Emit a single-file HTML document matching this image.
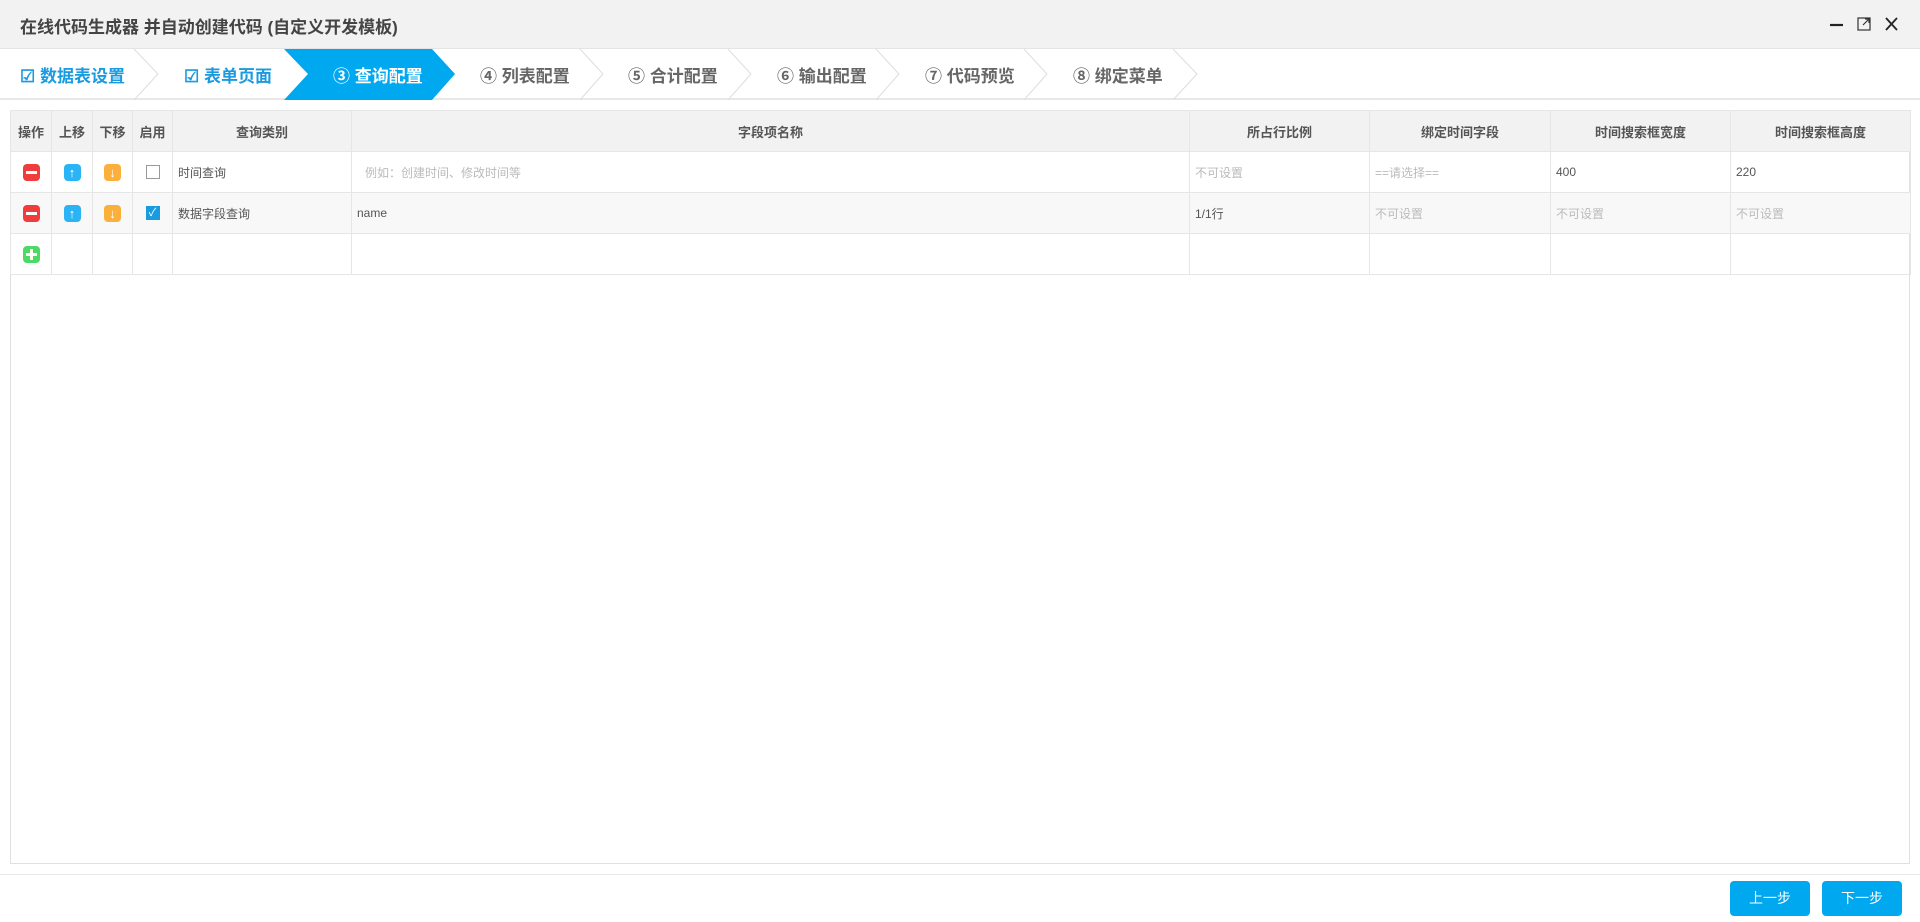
<!DOCTYPE html>
<html><head><meta charset="utf-8"><style>
*{margin:0;padding:0;box-sizing:border-box}
body{width:1920px;height:922px;background:#fff;font-family:"Liberation Sans","Noto Sans CJK SC",sans-serif;position:relative;overflow:hidden;color:#333}
.title{position:absolute;left:0;top:0;width:1920px;height:49px;background:#f2f2f2;border-bottom:1px solid #e4e4e4}
.title span{position:absolute;left:20px;top:13px;font-size:17px;font-weight:bold;color:#444}
.wicons{position:absolute;top:14px;right:14px}
.steps{position:absolute;left:0;top:49px;width:1920px;height:51px;border-bottom:2px solid #e8e8e8}
.st{position:absolute;top:13px;font-size:17px;color:#666;white-space:nowrap;font-weight:bold}
.st.done{color:#1a9be0}
.st.cur{color:#fff}
table{position:absolute;left:10px;top:110px;border-collapse:collapse;font-size:12px;color:#555}
td,th{border:1px solid #e6e6e6;height:41px;padding:0 5px;text-align:left;white-space:nowrap}
th{background:#f2f2f2;font-weight:bold;text-align:center;color:#555;font-size:13px}
tr.r2 td{background:#f8f8f8}
.ph{color:#bbb}
.c{text-align:center;padding:0}
.ic{display:inline-block;width:17px;height:17px;border-radius:4px;vertical-align:middle;position:relative}
.frame{position:absolute;left:10px;top:110px;width:1900px;height:754px;border:1px solid #e0e0e0}
.btn{position:absolute;top:881px;width:80px;height:35px;background:#00a8f0;color:#fff;border-radius:4px;font-size:14px;text-align:center;line-height:35px}
</style></head><body>
<div class="title"><span>在线代码生成器 并自动创建代码 (自定义开发模板)</span>
<svg class="wicons" width="80" height="20" viewBox="0 0 80 20"><path d="M4 11h13" stroke="#222" stroke-width="2.2"/><rect x="32" y="4" width="12" height="12" fill="none" stroke="#333" stroke-width="1.2"/><path d="M37 11l6-6M39 5h4v4" stroke="#333" stroke-width="1.2" fill="none"/><path d="M60 4l11 12M71 4l-11 12" stroke="#222" stroke-width="1.8"/></svg>
</div>
<div class="steps">
<svg width="1920" height="51" style="position:absolute;left:0;top:0">
<polygon points="284,0 432,0 455,25 432,51 284,51 308,25" fill="#00a8f0"/>
<g fill="none" stroke="#ddd" stroke-width="1">
<polyline points="134,0 158,25 134,51"/><polyline points="580,0 603,25 580,51"/><polyline points="728,0 751,25 728,51"/><polyline points="876,0 899,25 876,51"/><polyline points="1024,0 1047,25 1024,51"/><polyline points="1173,0 1197,25 1173,51"/>
</g></svg>
<div class="st done" style="left:20px">☑ 数据表设置</div>
<div class="st done" style="left:184px">☑ 表单页面</div>
<div class="st cur" style="left:333px">③ 查询配置</div>
<div class="st" style="left:480px">④ 列表配置</div>
<div class="st" style="left:628px">⑤ 合计配置</div>
<div class="st" style="left:777px">⑥ 输出配置</div>
<div class="st" style="left:925px">⑦ 代码预览</div>
<div class="st" style="left:1073px">⑧ 绑定菜单</div>
</div>
<div class="frame"></div>
<table>
<tr><th style="width:41px;padding:0">操作</th><th style="width:41px;padding:0">上移</th><th style="width:40px;padding:0">下移</th><th style="width:40px;padding:0">启用</th><th style="width:179px">查询类别</th><th style="width:838px">字段项名称</th><th style="width:180px">所占行比例</th><th style="width:181px">绑定时间字段</th><th style="width:180px">时间搜索框宽度</th><th style="width:180px">时间搜索框高度</th></tr>
<tr><td class="c"><span class="ic" style="background:#f03c3c"><span style="position:absolute;left:3px;top:7px;width:11px;height:3px;background:#fff"></span></span></td><td class="c"><span class="ic" style="background:#2ab4f5;color:#fff;font-size:13px;line-height:17px;font-weight:bold">↑</span></td><td class="c"><span class="ic" style="background:#fbb03b;color:#fff;font-size:13px;line-height:17px;font-weight:bold">↓</span></td><td class="c"><span style="display:inline-block;width:14px;height:14px;border:1px solid #999;vertical-align:middle"></span></td><td>时间查询</td><td class="ph" style="padding-left:13px">例如：创建时间、修改时间等</td><td class="ph">不可设置</td><td class="ph">==请选择==</td><td>400</td><td>220</td></tr>
<tr class="r2"><td class="c"><span class="ic" style="background:#f03c3c"><span style="position:absolute;left:3px;top:7px;width:11px;height:3px;background:#fff"></span></span></td><td class="c"><span class="ic" style="background:#2ab4f5;color:#fff;font-size:13px;line-height:17px;font-weight:bold">↑</span></td><td class="c"><span class="ic" style="background:#fbb03b;color:#fff;font-size:13px;line-height:17px;font-weight:bold">↓</span></td><td class="c"><span style="display:inline-block;width:14px;height:14px;background:#1a9be0;color:#fff;font-size:11px;line-height:14px;vertical-align:middle">✓</span></td><td>数据字段查询</td><td>name</td><td>1/1行</td><td class="ph">不可设置</td><td class="ph">不可设置</td><td class="ph">不可设置</td></tr>
<tr><td class="c"><span class="ic" style="background:#4cd964"><span style="position:absolute;left:3px;top:7px;width:11px;height:3px;background:#fff"></span><span style="position:absolute;left:7px;top:3px;width:3px;height:11px;background:#fff"></span></span></td><td></td><td></td><td></td><td></td><td></td><td></td><td></td><td></td><td></td></tr>
</table>
<div style="position:absolute;left:0;top:874px;width:1920px;border-top:1px solid #e8e8e8"></div>
<div class="btn" style="left:1730px">上一步</div>
<div class="btn" style="left:1822px">下一步</div>
</body></html>
